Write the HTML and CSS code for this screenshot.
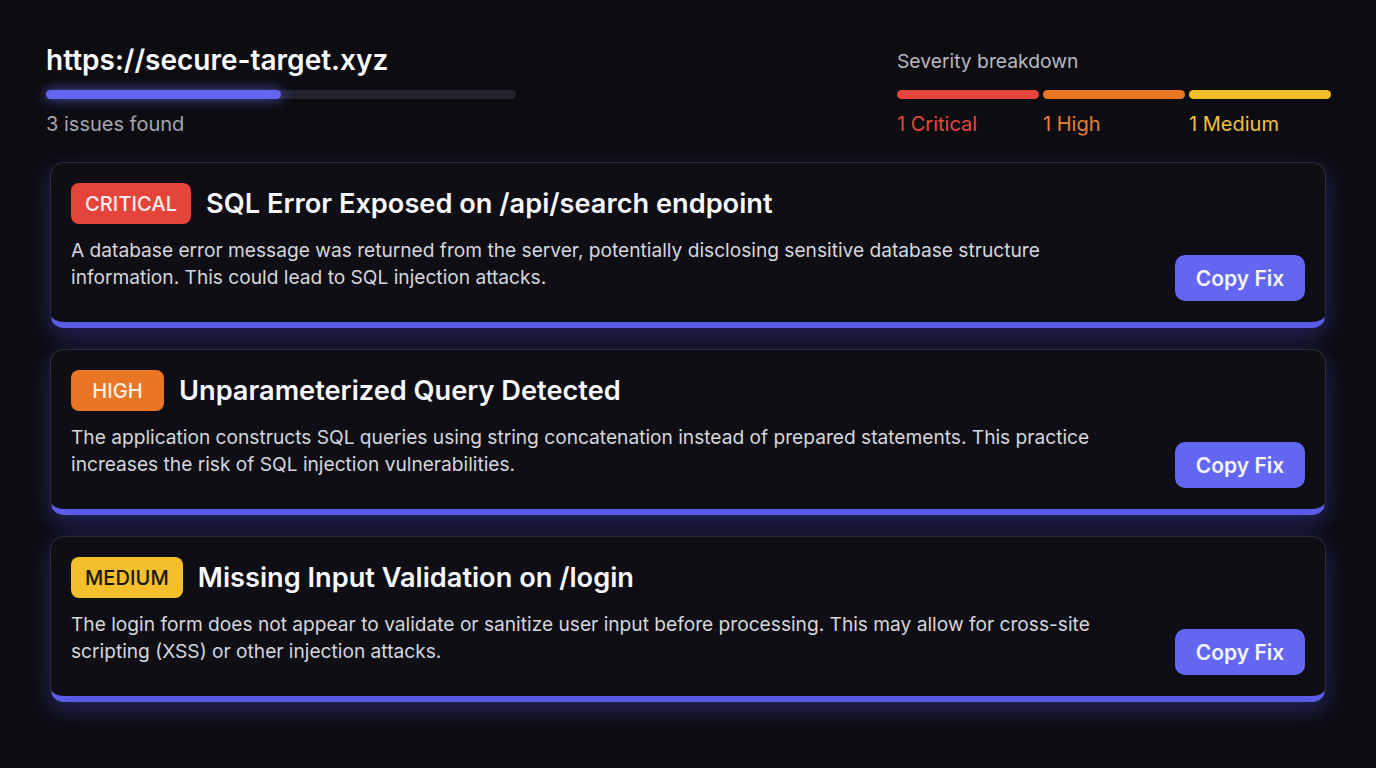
FILE: index.html
```html
<!DOCTYPE html>
<html lang="en">
<head>
<meta charset="utf-8">
<title>Scan results</title>
<link rel="stylesheet" href="styles.css">
</head>
<body>
<main class="page">
  <header class="top">
    <div class="target">
      <h1 class="url">https://secure-target.xyz</h1>
      <div class="progress"><div class="progress-fill" style="width:50%"></div></div>
      <p class="count">3 issues found</p>
    </div>
    <div class="breakdown">
      <p class="breakdown-title">Severity breakdown</p>
      <div class="seg-row">
        <div class="seg"><div class="seg-bar crit"></div><span class="seg-label t-crit">1 Critical</span></div>
        <div class="seg"><div class="seg-bar high"></div><span class="seg-label t-high">1 High</span></div>
        <div class="seg"><div class="seg-bar med"></div><span class="seg-label t-med">1 Medium</span></div>
      </div>
    </div>
  </header>

  <section class="list">
    <article class="card">
      <div class="card-body">
        <div class="card-head">
          <span class="badge b-crit">CRITICAL</span>
          <h2 class="card-title">SQL Error Exposed on /api/search endpoint</h2>
        </div>
        <p class="desc">A database error message was returned from the server, potentially disclosing sensitive database structure information. This could lead to SQL injection attacks.</p>
      </div>
      <button class="copy">Copy Fix</button>
    </article>
    <article class="card">
      <div class="card-body">
        <div class="card-head">
          <span class="badge b-high">HIGH</span>
          <h2 class="card-title">Unparameterized Query Detected</h2>
        </div>
        <p class="desc">The application constructs SQL queries using string concatenation instead of prepared statements. This practice increases the risk of SQL injection vulnerabilities.</p>
      </div>
      <button class="copy">Copy Fix</button>
    </article>
    <article class="card">
      <div class="card-body">
        <div class="card-head">
          <span class="badge b-med">MEDIUM</span>
          <h2 class="card-title">Missing Input Validation on /login</h2>
        </div>
        <p class="desc">The login form does not appear to validate or sanitize user input before processing. This may allow for cross-site scripting (XSS) or other injection attacks.</p>
      </div>
      <button class="copy">Copy Fix</button>
    </article>
  </section>
</main>
</body>
</html>
```

FILE: styles.css
```css
* { box-sizing: border-box; }
html, body {
  margin: 0;
  padding: 0;
  background: #0c0c11;
  font-family: Inter, "Noto Sans", "Liberation Sans", sans-serif;
  color: #e6e6ec;
}
.page {
  width: 1376px;
  height: 768px;
  padding: 42px 50px 0 46px;
  overflow: hidden;
}
.top {
  display: flex;
  justify-content: space-between;
  align-items: flex-start;
}
.target { width: 470px; }
.url {
  margin: 0;
  font-size: 28px;
  font-weight: 600;
  line-height: 36px;
  color: #fafafc;
}
.progress {
  margin-top: 12px;
  height: 9px;
  border-radius: 5px;
  background: #22232f;
}
.progress-fill {
  height: 100%;
  border-radius: 5px;
  background: #6366f1;
  box-shadow: 0 0 12px 2px rgba(99, 102, 241, 0.55);
}
.count {
  margin: 12px 0 0;
  font-size: 20px;
  line-height: 26px;
  color: #a5a6b0;
}
.breakdown {
  width: 434px;
  margin-right: -5px;
  padding-top: 6px;
}
.breakdown-title {
  margin: 0;
  font-size: 19.3px;
  line-height: 26px;
  color: #b7b8c2;
}
.seg-row {
  display: grid;
  grid-template-columns: repeat(3, 1fr);
  gap: 4px;
  margin-top: 16px;
}
.seg { display: flex; flex-direction: column; }
.seg-bar { height: 9px; border-radius: 5px; }
.crit { background: #e5443a; }
.high { background: #e87624; }
.med { background: #f3bf2a; }
.seg-label {
  margin-top: 12px;
  font-size: 20px;
  line-height: 26px;
}
.t-crit { color: #e5483d; }
.t-high { color: #e8802f; }
.t-med { color: #f2c23a; }

.list {
  display: flex;
  flex-direction: column;
  gap: 21px;
  margin-top: 25px;
  margin-left: 4px;
}
.card {
  display: flex;
  align-items: flex-end;
  justify-content: space-between;
  gap: 24px;
  height: 166px;
  padding: 20px;
  background: #0e0e14;
  border: 1px solid #2b2c38;
  border-bottom: 6px solid #5b5ce6;
  border-radius: 14px;
  box-shadow: 0 8px 24px rgba(80, 82, 230, 0.38);
}
.card-body {
  flex: 1;
  align-self: flex-start;
  max-width: 1050px;
}
.card-head {
  display: flex;
  align-items: center;
  gap: 15px;
}
.badge {
  display: inline-flex;
  align-items: center;
  justify-content: center;
  min-width: 93px;
  height: 41px;
  padding: 0 14px;
  border-radius: 8px;
  font-size: 20px;
  font-weight: 500;
  letter-spacing: 0.1px;
}
.b-crit { background: #e5443a; color: #fbeceb; }
.b-high { background: #e87624; color: #fdf1e6; }
.b-med { background: #f3bf2a; color: #1b1608; }
.card-title {
  margin: 0;
  font-size: 27.2px;
  font-weight: 600;
  line-height: 36px;
  color: #f8f8fb;
}
.desc {
  margin: 13px 0 0;
  font-size: 19.15px;
  line-height: 27px;
  color: #d6d7de;
}
.copy {
  flex: none;
  width: 130px;
  height: 46px;
  margin-bottom: 1px;
  border: none;
  border-radius: 10px;
  background: #6366f1;
  color: #f4f4ff;
  font-family: inherit;
  font-size: 21px;
  font-weight: 600;
  cursor: pointer;
}
```
